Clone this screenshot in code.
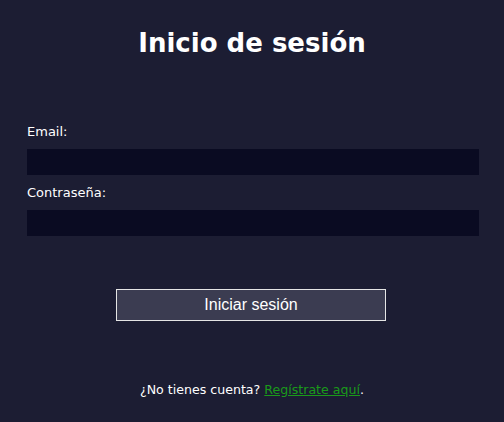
export default function App() {
  return (
    <div className="w-[504px] h-[422px] bg-[#1c1d33] text-white overflow-hidden" style={{ fontFamily: '"DejaVu Sans", Verdana, sans-serif' }}>
      <h1 className="pt-[25px] text-center text-[26px] font-bold leading-[36px]">Inicio de sesión</h1>
      <div className="mt-[63px] pl-[27px] w-[479px]">
        <label className="block text-[13px] leading-[16px]">Email:</label>
        <div className="mt-[9px] h-[26px] bg-[#0a0b22]" />
        <label className="block mt-[10px] text-[13px] leading-[16px]">Contraseña:</label>
        <div className="mt-[9px] h-[26px] bg-[#0a0b22]" />
      </div>
      <div className="mt-[53px] pl-[116px]">
        <button className="w-[270px] h-[32px] bg-[#3b3c51] border border-[#e5e5e5] text-[16px] text-white" style={{ fontFamily: '"Liberation Sans", Arial, sans-serif' }}>Iniciar sesión</button>
      </div>
      <p className="mt-[61px] text-center text-[12.6px] leading-[16px]">
        ¿No tienes cuenta? <a className="text-[#1a9a1a] underline">Regístrate aquí</a>.
      </p>
    </div>
  );
}
